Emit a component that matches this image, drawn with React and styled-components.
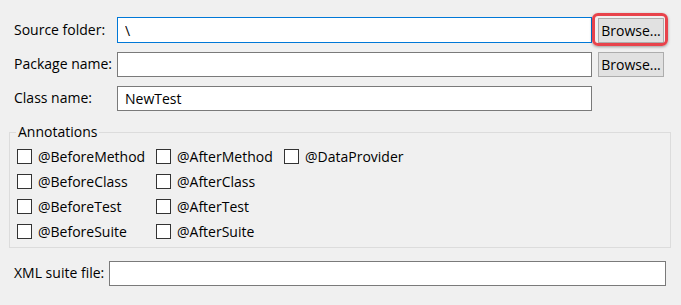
import React from "react";
import styled, { createGlobalStyle } from "styled-components";

const GlobalStyle = createGlobalStyle`
  html, body {
    margin: 0;
    padding: 0;
    background: #f0f0f0;
  }
  body {
    font-family: "Open Sans", "Noto Sans", sans-serif;
    font-size: 14px;
    color: #000;
  }
`;

const Page = styled.div`
  width: 681px;
  height: 305px;
  box-sizing: border-box;
  padding: 17px 17px 0 9px;
  background: #f0f0f0;
`;

const FormGrid = styled.div`
  display: grid;
  grid-template-columns: 97px 1fr 66px;
  grid-auto-rows: 26px;
  column-gap: 6px;
  row-gap: 8px;
  padding-left: 5px;
  align-items: center;
`;

const Label = styled.label`
  white-space: nowrap;
  line-height: 26px;
`;

const TextInput = styled.input`
  box-sizing: border-box;
  height: ${(p) => (p.focused ? "26px" : "25px")};
  width: 100%;
  margin: 0;
  padding: 0 7px;
  border: 1px solid ${(p) => (p.focused ? "#0078d7" : "#7a7a7a")};
  background: #fff;
  font: inherit;
  color: #000;
  outline: none;
`;

const ButtonWrap = styled.div`
  position: relative;
  height: 25px;
  align-self: end;
`;

const Button = styled.button`
  box-sizing: border-box;
  width: 66px;
  height: 25px;
  margin: 0;
  padding: 0;
  border: 1px solid #adadad;
  background: #e1e1e1;
  font: inherit;
  color: #000;
`;

const Highlight = styled.span`
  position: absolute;
  left: -6px;
  top: -5px;
  right: -4px;
  bottom: -3px;
  border: 3px solid #e8434b;
  border-radius: 6px;
  box-shadow: 0 1px 3px rgba(0, 0, 0, 0.35);
  pointer-events: none;
`;

const Group = styled.fieldset`
  margin: 13px -7px 0 0;
  padding: 0 0 0 7px;
  border: 1px solid #dcdcdc;
  height: 124px;
  box-sizing: border-box;
`;

const Legend = styled.legend`
  padding: 0 2px;
  margin-left: -1px;
  line-height: 16px;
`;

const CheckGrid = styled.div`
  display: grid;
  grid-template-columns: 139px 128px auto;
  grid-auto-rows: 25px;
  margin-top: 4px;
`;

const CheckItem = styled.label`
  display: flex;
  align-items: center;
  gap: 6px;
  white-space: nowrap;
`;

const Box = styled.input.attrs({ type: "checkbox" })`
  appearance: none;
  box-sizing: border-box;
  width: 15px;
  height: 15px;
  margin: 0;
  border: 1px solid #333;
  background: #fff;
`;

const XmlRow = styled.div`
  display: flex;
  align-items: center;
  gap: 5px;
  margin-top: 12px;
  padding-left: 5px;
  margin-right: -2px;
`;

const annotations = [
  ["@BeforeMethod", "@AfterMethod", "@DataProvider"],
  ["@BeforeClass", "@AfterClass"],
  ["@BeforeTest", "@AfterTest"],
  ["@BeforeSuite", "@AfterSuite"],
];

const App = () => (
  <>
    <GlobalStyle />
    <Page>
      <FormGrid>
        <Label>Source folder:</Label>
        <TextInput focused defaultValue="\" />
        <ButtonWrap>
          <Button>Browse...</Button>
          <Highlight />
        </ButtonWrap>

        <Label>Package name:</Label>
        <TextInput />
        <ButtonWrap>
          <Button>Browse...</Button>
        </ButtonWrap>

        <Label>Class name:</Label>
        <TextInput defaultValue="NewTest" />
        <span />
      </FormGrid>

      <Group>
        <Legend>Annotations</Legend>
        <CheckGrid>
          {annotations.map((row, i) => (
            <React.Fragment key={i}>
              {[0, 1, 2].map((j) =>
                row[j] ? (
                  <CheckItem key={j}>
                    <Box />
                    {row[j]}
                  </CheckItem>
                ) : (
                  <span key={j} />
                )
              )}
            </React.Fragment>
          ))}
        </CheckGrid>
      </Group>

      <XmlRow>
        <Label>XML suite file:</Label>
        <TextInput />
      </XmlRow>
    </Page>
  </>
);

export default App;
